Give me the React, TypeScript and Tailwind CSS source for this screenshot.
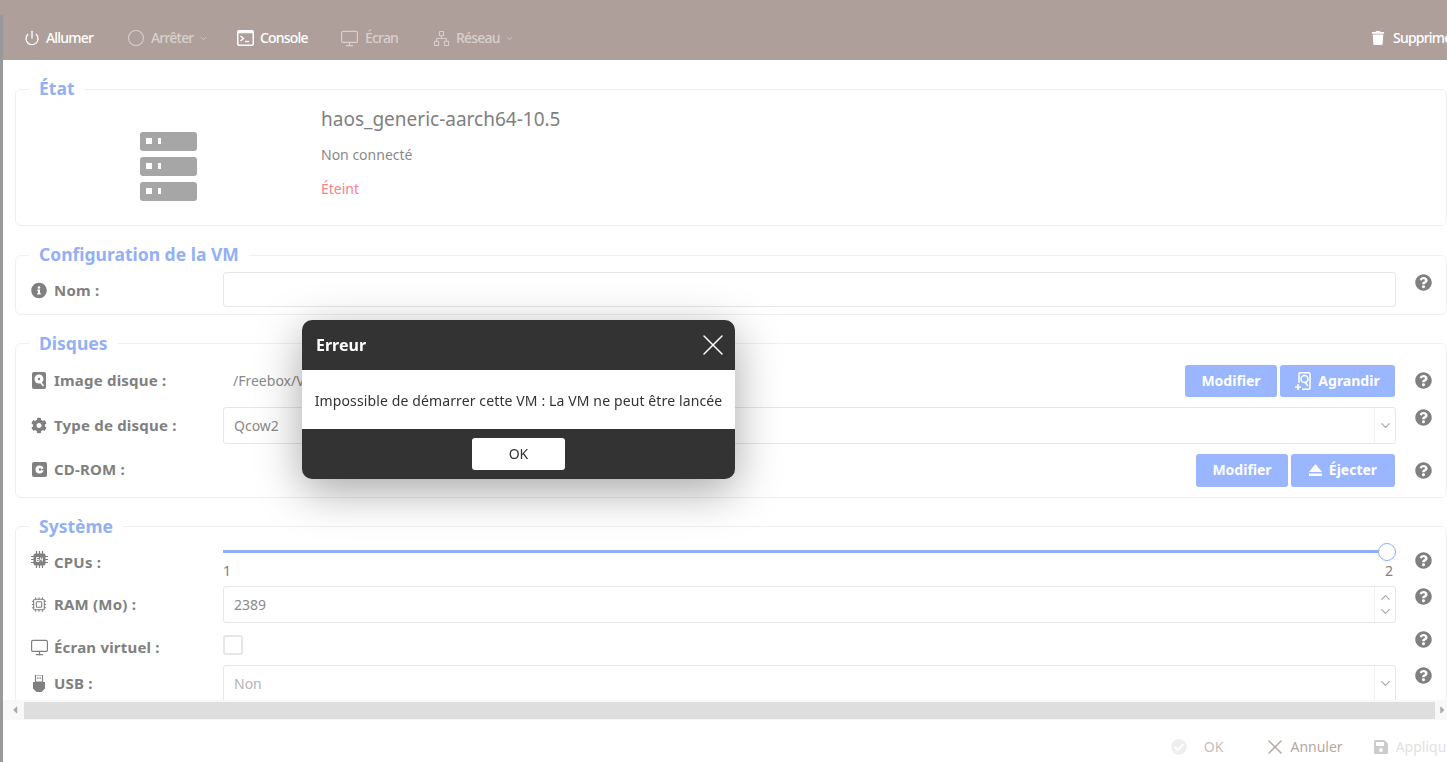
import React from 'react';
import { Power, Circle, Monitor, Network, ChevronDown, ChevronUp, Cpu, X } from 'lucide-react';
import { FaQuestionCircle, FaInfoCircle, FaCog, FaTrash, FaSave, FaCheckCircle, FaCaretLeft, FaCaretRight } from 'react-icons/fa';

const ConsoleIcon: React.FC = () => (
    <svg width="17" height="16" viewBox="0 0 17 16" className="shrink-0">
        <rect x="0.75" y="0.75" width="15.5" height="14.5" rx="1.5" fill="none" stroke="white" strokeWidth="1.5" />
        <rect x="0.75" y="0.75" width="15.5" height="2.5" fill="white" />
        <path d="M3.5 6l3 2.5-3 2.5" fill="none" stroke="white" strokeWidth="1.4" />
        <path d="M8 11.5h4" stroke="white" strokeWidth="1.4" />
    </svg>
);

const ServerIcon: React.FC = () => (
    <svg width="57" height="69" viewBox="0 0 57 69">
        {[0, 25, 50].map(y => (
            <g key={y}>
                <rect x="0" y={y} width="57" height="19" rx="3" fill="#a6a6a6" />
                <rect x="6" y={y + 6} width="6" height="6" fill="white" />
                <rect x="18" y={y + 6} width="3" height="6" fill="white" />
            </g>
        ))}
    </svg>
);

const DiskIcon: React.FC = () => (
    <svg width="14" height="17" viewBox="0 0 14 17" className="shrink-0">
        <rect x="0" y="0" width="14" height="17" rx="2" fill="#808080" />
        <circle cx="7" cy="7" r="4.5" fill="white" />
        <circle cx="7" cy="7" r="1.2" fill="#808080" />
        <path d="M8 9.5l3.5 4.5" stroke="white" strokeWidth="1.5" />
    </svg>
);

const CdIcon: React.FC = () => (
    <svg width="15" height="15" viewBox="0 0 15 15" className="shrink-0">
        <rect width="15" height="15" rx="2" fill="#808080" />
        <circle cx="7.5" cy="7.5" r="4" fill="white" />
        <circle cx="8" cy="7.5" r="1.2" fill="#808080" />
        <rect x="9.5" y="6.7" width="4" height="1.6" fill="#808080" />
    </svg>
);

const UsbIcon: React.FC = () => (
    <svg width="12" height="17" viewBox="0 0 12 17" className="shrink-0">
        <path d="M2.5 0h7v7h-7z" fill="none" stroke="#808080" strokeWidth="1.2" />
        <rect x="4.3" y="2.3" width="1.2" height="1.6" fill="#808080" />
        <rect x="6.6" y="2.3" width="1.2" height="1.6" fill="#808080" />
        <path d="M0 7h12v6.5L8.5 17h-5L0 13.5z" fill="#808080" />
    </svg>
);

const ChipIcon: React.FC = () => (
    <svg width="17" height="17" viewBox="0 0 17 17" className="shrink-0">
        <rect x="2.5" y="2.5" width="12" height="12" rx="2" fill="#808080" />
        <path d="M5.5 0v3M8.5 0v3M11.5 0v3M5.5 14v3M8.5 14v3M11.5 14v3M0 5.5h3M0 8.5h3M0 11.5h3M14 5.5h3M14 8.5h3M14 11.5h3" stroke="#808080" strokeWidth="1.2" />
        <path d="M8 6.5H5.5v4H8v-2H6M9.5 6.5v2.2h2M11.3 6.5v4" fill="none" stroke="white" strokeWidth="0.9" />
    </svg>
);

const EjectIcon: React.FC = () => (
    <svg width="13" height="12" viewBox="0 0 13 12" className="shrink-0">
        <path d="M6.5 0L13 8H0z" fill="white" />
        <rect y="9.5" width="13" height="2.5" fill="white" />
    </svg>
);

const ExpandDiskIcon: React.FC = () => (
    <svg width="16" height="18" viewBox="0 0 16 18" className="shrink-0">
        <path d="M4 .75h9.5a1.5 1.5 0 0 1 1.5 1.5v13.5a1.5 1.5 0 0 1-1.5 1.5H7" fill="none" stroke="white" strokeWidth="1.5" />
        <path d="M4 .75v10" stroke="white" strokeWidth="1.5" />
        <circle cx="9.5" cy="7" r="3.5" fill="none" stroke="white" strokeWidth="1.5" />
        <path d="M10 10l3 4" stroke="white" strokeWidth="1.5" />
        <path d="M0 15h6M3 12v6" stroke="white" strokeWidth="1.6" />
    </svg>
);

const Section: React.FC<{ title: string; children: React.ReactNode; className?: string; legendClass?: string }> = ({ title, children, className = '', legendClass = 'pb-[2px]' }) => (
    <fieldset className={`border border-[#efefef] rounded-md pl-[15px] ${className}`}>
        <legend className={`-ml-[2px] px-[10px] text-[17.5px] leading-[22px] font-bold text-[#93aff5] ${legendClass}`}>{title}</legend>
        {children}
    </fieldset>
);

const Row: React.FC<{ icon: React.ReactNode; label: string; children: React.ReactNode; heightClass: string; helpClass: string; labelClass?: string }> = ({ icon, label, children, heightClass, helpClass, labelClass = 'items-center' }) => (
    <div className={`flex ${heightClass}`}>
        <div className={`w-[192px] flex shrink-0 ${labelClass}`}>
            <span className="w-[23px] flex justify-center shrink-0 pr-[7px]">{icon}</span>
            <span className="text-[15px] tracking-[0.2px] font-bold text-[#808080] whitespace-nowrap">{label}</span>
        </div>
        <div className="w-[1173px] shrink-0">{children}</div>
        <FaQuestionCircle className={`ml-[19px] shrink-0 text-[#808080] ${helpClass}`} size={17} />
    </div>
);

const Field: React.FC<{ text?: string; textClass?: string; addon?: React.ReactNode }> = ({ text, textClass = 'text-[#8a8a8a]', addon }) => (
    <div className="flex h-full border border-[#e6e6e6] rounded-[3px] bg-white">
        <div className={`flex-1 flex items-center pl-[10px] text-sm ${textClass}`}>{text}</div>
        {addon}
    </div>
);

const SelectArrow: React.FC = () => (
    <div className="w-[21px] flex items-center justify-center border-l border-[#efefef]">
        <ChevronDown size={15} className="text-[#aaaaaa]" />
    </div>
);

const BlueButton: React.FC<{ children: React.ReactNode; className: string }> = ({ children, className }) => (
    <div className={`flex items-center justify-center gap-[7px] h-full bg-[#99b6ff] rounded-[3px] text-white text-sm font-bold ${className}`}>{children}</div>
);

const ToolItem: React.FC<{ icon: React.ReactNode; label: string; on?: boolean; caret?: boolean; className: string }> = ({ icon, label, on, caret, className }) => (
    <div className={`flex items-center gap-[6px] text-sm font-medium tracking-[-0.8px] whitespace-nowrap ${on ? 'text-white' : 'text-[#d8d0cd]'} ${className}`}>
        {icon}
        <span>{label}</span>
        {caret && <ChevronDown size={9} className="-ml-[1px]" />}
    </div>
);

export default function App() {
    return (
        <div className="h-screen w-full flex flex-col overflow-hidden bg-white" style={{ fontFamily: '"Noto Sans", sans-serif' }}>
            <div className="h-[15px] shrink-0 bg-[#ae9f9b]" />
            <div className="flex-1 min-h-0 flex">
                <div className="w-[3px] shrink-0 bg-[#999999]" />
                <div className="flex-1 min-w-0 flex flex-col overflow-hidden">
                    <div className="h-[45px] shrink-0 flex items-center bg-[#ae9f9b] pl-[21px] pt-[1px]">
                        <ToolItem on label="Allumer" icon={<Power size={16} strokeWidth={2} />} className="w-[103px]" />
                        <ToolItem label="Arrêter" caret icon={<Circle size={18} strokeWidth={1.4} />} className="w-[109px]" />
                        <ToolItem on label="Console" icon={<ConsoleIcon />} className="w-[104px] pl-[1px]" />
                        <ToolItem label="Écran" icon={<Monitor size={19} strokeWidth={1.5} />} className="w-[93px]" />
                        <ToolItem label="Réseau" caret icon={<Network size={17} strokeWidth={1.5} />} className="w-[100px]" />
                        <ToolItem on label="Supprimer" icon={<FaTrash size={14} className="mr-[2px]" />} className="ml-auto -mr-[20px] w-[96px]" />
                    </div>

                    <div className="flex-1 min-h-0 overflow-hidden pl-[12px]">
                        <div className="w-[1432px] pt-[17px]">
                            <Section title="État">
                                <div className="h-[124px] flex">
                                    <div className="w-[166px] pl-[109px] pt-[31px] shrink-0"><ServerIcon /></div>
                                    <div className="ml-[124px] pt-[4px]">
                                        <div className="text-[19px] leading-7 text-[#808080]">haos_generic-aarch64-10.5</div>
                                        <div className="mt-[12px] text-sm leading-5 text-[#8a8a8a]">Non connecté</div>
                                        <div className="mt-[14px] text-sm leading-5 text-[#ff7f87]">Éteint</div>
                                    </div>
                                </div>
                            </Section>

                            <Section title="Configuration de la VM" className="mt-[17px]">
                                <div className="pt-[5px] pb-[7px]">
                                    <Row icon={<FaInfoCircle size={17} className="text-[#808080]" />} label="Nom :" heightClass="h-[35px]" helpClass="mt-[2px]" labelClass="items-center pt-[2px]">
                                        <Field />
                                    </Row>
                                </div>
                            </Section>

                            <Section title="Disques" className="mt-[16px]" legendClass="pt-[1px] pb-[1px]">
                                <div className="pt-[10px] pb-[10px]">
                                    <Row icon={<DiskIcon />} label="Image disque :" heightClass="h-[32px]" helpClass="mt-[7px]" labelClass="items-center pb-[2px]">
                                        <div className="flex h-full items-center pr-[1px]">
                                            <span className="pl-[10px] text-sm text-[#8a8a8a]">/Freebox/VMs/haos_generic-aarch64-10.5.qcow2</span>
                                            <div className="ml-auto flex h-full gap-[3px]">
                                                <BlueButton className="w-[92px]">Modifier</BlueButton>
                                                <BlueButton className="w-[115px]"><ExpandDiskIcon />Agrandir</BlueButton>
                                            </div>
                                        </div>
                                    </Row>
                                    <div className="mt-[10px]">
                                        <Row icon={<FaCog size={17} className="text-[#808080]" />} label="Type de disque :" heightClass="h-[37px]" helpClass="mt-[2px]">
                                            <Field text="Qcow2" addon={<SelectArrow />} />
                                        </Row>
                                    </div>
                                    <div className="mt-[10px]">
                                        <Row icon={<CdIcon />} label="CD-ROM :" heightClass="h-[33px]" helpClass="mt-[8px]" labelClass="items-center pb-[3px]">
                                            <div className="flex h-full justify-end gap-[3px] pr-[1px]">
                                                <BlueButton className="w-[92px] pb-[1px]">Modifier</BlueButton>
                                                <BlueButton className="w-[104px] pb-[1px]"><EjectIcon />Éjecter</BlueButton>
                                            </div>
                                        </Row>
                                    </div>
                                </div>
                            </Section>

                            <Section title="Système" className="mt-[16px]" legendClass="pt-[1px] pb-[1px]">
                                <div className="pt-[4px]">
                                    <Row icon={<ChipIcon />} label="CPUs :" heightClass="h-[38px]" helpClass="mt-[10px]" labelClass="items-start pt-[9px]">
                                        <div className="pt-[8px] pr-[9px]">
                                            <div className="relative h-[3px] bg-[#8fadf8]">
                                                <div className="absolute -right-[9px] -top-[7px] w-[18px] h-[18px] rounded-full bg-white border border-[#8fadf8]" />
                                            </div>
                                            <div className="mt-[8px] -mr-[6px] flex justify-between text-sm leading-5 text-[#808080]">
                                                <span>1</span>
                                                <span>2</span>
                                            </div>
                                        </div>
                                    </Row>
                                    <div className="mt-[6px]">
                                        <Row icon={<Cpu size={17} className="text-[#808080]" strokeWidth={1.6} />} label="RAM (Mo) :" heightClass="h-[37px]" helpClass="mt-[2px]">
                                            <Field
                                                text="2389"
                                                addon={
                                                    <div className="w-[21px] flex flex-col items-center justify-center border-l border-[#efefef] text-[#aaaaaa]">
                                                        <ChevronUp size={15} className="-mb-[1px]" />
                                                        <ChevronDown size={15} />
                                                    </div>
                                                }
                                            />
                                        </Row>
                                    </div>
                                    <div className="mt-[12px]">
                                        <Row icon={<Monitor size={19} className="text-[#808080] shrink-0" strokeWidth={1.5} />} label="Écran virtuel :" heightClass="h-[20px]" helpClass="-mt-[4px]" labelClass="items-center pt-[4px]">
                                            <div className="w-[20px] h-[20px] border-2 border-[#e6e6e6] rounded-[3px]" />
                                        </Row>
                                    </div>
                                    <div className="mt-[10px]">
                                        <Row icon={<UsbIcon />} label="USB :" heightClass="h-[37px]" helpClass="mt-[2px]">
                                            <Field text="Non" textClass="text-[#b5b5b5]" addon={<SelectArrow />} />
                                        </Row>
                                    </div>
                                </div>
                            </Section>
                        </div>
                    </div>

                    <div className="h-[20px] shrink-0 flex items-center bg-[#f8f8f8] text-[#aaaaaa]">
                        <FaCaretLeft size={12} className="w-[21px] shrink-0 pl-[3px]" />
                        <div className="flex-1 h-[17px] bg-[#dedede]" />
                        <FaCaretRight size={12} className="w-[9px] shrink-0 ml-[3px]" />
                    </div>

                    <div className="h-[42px] shrink-0 flex items-center justify-end text-sm -mr-[13px] pt-[12px]">
                        <FaCheckCircle size={16} className="text-[#eeeeee]" />
                        <span className="ml-[17px] text-[#c9bdb9]">OK</span>
                        <X size={24} strokeWidth={1.5} className="ml-[40px] text-[#b5a8a4]" />
                        <span className="ml-[3px] text-[#b5a8a4]">Annuler</span>
                        <FaSave size={16} className="ml-[30px] text-[#cccccc]" />
                        <span className="ml-[7px] text-[#e2e2e2]">Appliquer</span>
                    </div>
                </div>
            </div>

            {/* error dialog */}
            <div className="fixed left-[302px] top-[320px] w-[433px] rounded-[10px] bg-[#333333] shadow-[0_12px_45px_rgba(0,0,0,0.35)] overflow-hidden">
                <div className="h-[50px] flex items-center justify-between pl-[14px] pr-[4px]">
                    <span className="text-base font-bold text-white">Erreur</span>
                    <X size={36} strokeWidth={1} className="text-white" />
                </div>
                <div className="h-[59px] flex items-center justify-center pt-[3px] bg-white text-sm tracking-[0.12px] text-[#333333] whitespace-nowrap">
                    Impossible de démarrer cette VM : La VM ne peut être lancée
                </div>
                <div className="h-[50px] flex items-center justify-center">
                    <div className="w-[93px] h-[32px] flex items-center justify-center bg-white rounded-[3px] text-sm text-[#333333]">OK</div>
                </div>
            </div>
        </div>
    );
}
